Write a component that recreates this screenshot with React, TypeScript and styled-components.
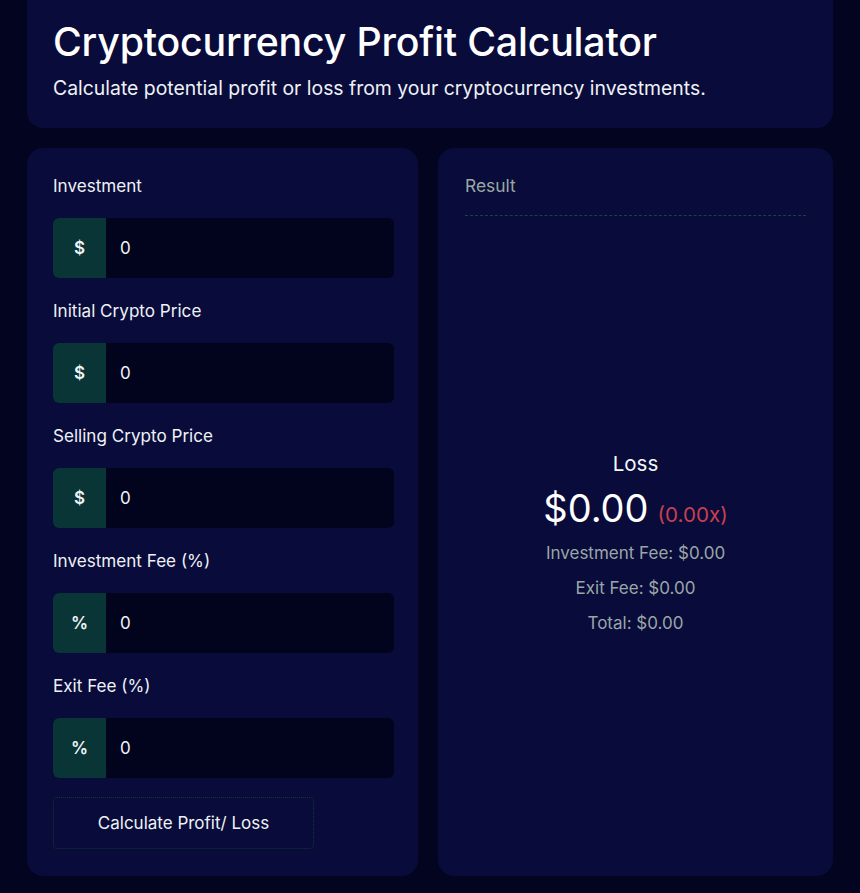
import React, { useState } from "react";
import styled, { createGlobalStyle } from "styled-components";

const GlobalStyle = createGlobalStyle`
  html, body {
    margin: 0;
    padding: 0;
    background: #03041f;
  }
  body {
    font-family: Inter, "Noto Sans", sans-serif;
    color: #f0f4f8;
  }
  * {
    box-sizing: border-box;
  }
`;

const Page = styled.div`
  width: 806px;
  margin: 0 auto;
  padding-bottom: 17px;
  display: flex;
  flex-direction: column;
  gap: 20px;
`;

const HeaderCard = styled.div`
  background: #090b3a;
  border-radius: 0 0 16px 16px;
  padding: 18px 26px 28px 26px;
`;

const Title = styled.h1`
  margin: 0;
  font-size: 39.3px;
  line-height: 48px;
  font-weight: 500;
  color: #ffffff;
  letter-spacing: -0.2px;
`;

const Subtitle = styled.p`
  margin: 10px 0 0 0;
  font-size: 19.4px;
  line-height: 24px;
  color: #eef2f6;
`;

const Columns = styled.div`
  display: grid;
  grid-template-columns: 391px 1fr;
  gap: 20px;
`;

const Card = styled.div<{ $right?: boolean }>`
  background: #090b3a;
  border-radius: 16px;
  padding: ${(p) => (p.$right ? "26px 27px 27px 27px" : "26px 24px 27px 26px")};
  height: 728px;
  display: flex;
  flex-direction: column;
`;

const Field = styled.div`
  display: flex;
  flex-direction: column;
  gap: 20px;
  margin-bottom: 21px;
`;

const Label = styled.label`
  font-size: 17.1px;
  line-height: 24px;
  color: #eef2f6;
`;

const InputGroup = styled.div`
  display: flex;
  height: 60px;
  border-radius: 6px;
  overflow: hidden;
  background: #02031c;
`;

const Prefix = styled.span`
  width: 53px;
  flex: 0 0 53px;
  display: flex;
  align-items: center;
  justify-content: center;
  background: #0a3536;
  font-size: 17px;
  font-weight: 600;
  color: #f0f4f8;
`;

const Input = styled.input`
  flex: 1;
  min-width: 0;
  border: none;
  outline: none;
  background: transparent;
  padding: 0 14px;
  font-family: Inter, "Noto Sans", sans-serif;
  font-size: 17px;
  color: #f0f4f8;
`;

const CalcButton = styled.button`
  width: 261px;
  height: 52px;
  margin-top: -2px;
  border: 1px dotted #0c3a2c;
  border-radius: 4px;
  background: transparent;
  font-family: Inter, "Noto Sans", sans-serif;
  font-size: 17px;
  color: #eef2f6;
  cursor: pointer;
`;

const ResultTitle = styled.div`
  font-size: 17.4px;
  line-height: 24px;
  color: #9aa8a4;
`;

const Divider = styled.div`
  margin-top: 17px;
  border-top: 1px dashed #0f4a32;
`;

const ResultBody = styled.div`
  flex: 1;
  display: flex;
  flex-direction: column;
  align-items: center;
  justify-content: center;
  padding-top: 20px;
`;

const Outcome = styled.div`
  font-size: 20.5px;
  line-height: 28px;
  color: #f4f6f8;
  margin-bottom: -2px;
`;

const AmountRow = styled.div`
  display: flex;
  align-items: baseline;
  gap: 9px;
  margin-top: 6px;
  margin-bottom: -4px;
`;

const Amount = styled.span`
  font-size: 38px;
  line-height: 52px;
  color: #ffffff;
`;

const Ratio = styled.span<{ $positive: boolean }>`
  font-size: 20.6px;
  color: ${(p) => (p.$positive ? "#3fbf7f" : "#c8404f")};
`;

const FeeLine = styled.div`
  font-size: 17px;
  line-height: 24px;
  color: #9aa6a6;
  margin-top: 11px;
`;

const fields = [
  { label: "Investment", prefix: "$" },
  { label: "Initial Crypto Price", prefix: "$" },
  { label: "Selling Crypto Price", prefix: "$" },
  { label: "Investment Fee (%)", prefix: "%" },
  { label: "Exit Fee (%)", prefix: "%" },
];

const fmt = (n: number) => `$${Math.abs(n).toFixed(2)}`;

export default function App() {
  const [values, setValues] = useState<string[]>(["0", "0", "0", "0", "0"]);
  const [result, setResult] = useState({ profit: 0, ratio: 0, invFee: 0, exitFee: 0, total: 0 });

  const calculate = () => {
    const [inv, buy, sell, invPct, exitPct] = values.map((v) => parseFloat(v) || 0);
    const invFee = (inv * invPct) / 100;
    const coins = buy > 0 ? (inv - invFee) / buy : 0;
    const gross = coins * sell;
    const exitFee = (gross * exitPct) / 100;
    const total = gross - exitFee;
    const profit = total - inv;
    setResult({ profit, ratio: inv > 0 ? total / inv : 0, invFee, exitFee, total });
  };

  return (
    <>
      <GlobalStyle />
      <Page>
        <HeaderCard>
          <Title>Cryptocurrency Profit Calculator</Title>
          <Subtitle>Calculate potential profit or loss from your cryptocurrency investments.</Subtitle>
        </HeaderCard>
        <Columns>
          <Card>
            {fields.map((f, i) => (
              <Field key={f.label}>
                <Label>{f.label}</Label>
                <InputGroup>
                  <Prefix>{f.prefix}</Prefix>
                  <Input
                    value={values[i]}
                    onChange={(e) => {
                      const next = [...values];
                      next[i] = e.target.value;
                      setValues(next);
                    }}
                  />
                </InputGroup>
              </Field>
            ))}
            <CalcButton onClick={calculate}>Calculate Profit/ Loss</CalcButton>
          </Card>
          <Card $right>
            <ResultTitle>Result</ResultTitle>
            <Divider />
            <ResultBody>
              <Outcome>{result.profit > 0 ? "Profit" : "Loss"}</Outcome>
              <AmountRow>
                <Amount>{fmt(result.profit)}</Amount>
                <Ratio $positive={result.profit > 0}>({result.ratio.toFixed(2)}x)</Ratio>
              </AmountRow>
              <FeeLine>Investment Fee: {fmt(result.invFee)}</FeeLine>
              <FeeLine>Exit Fee: {fmt(result.exitFee)}</FeeLine>
              <FeeLine>Total: {fmt(result.total)}</FeeLine>
            </ResultBody>
          </Card>
        </Columns>
      </Page>
    </>
  );
}
